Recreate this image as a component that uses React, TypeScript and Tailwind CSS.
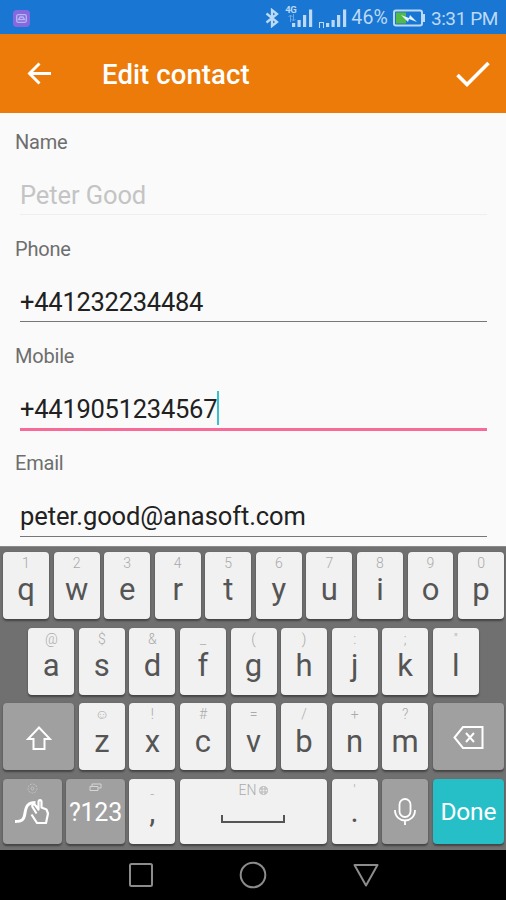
import type { ReactNode } from 'react';

interface FieldProps {
  label: string;
  value: string;
  state?: 'disabled' | 'focused';
  spacing?: string;
}

interface KeyProps {
  label?: string;
  hint?: ReactNode;
  className?: string;
  labelClass?: string;
  hintClass?: string;
  children?: ReactNode;
}

const TOP_ROW = ['q1', 'w2', 'e3', 'r4', 't5', 'y6', 'u7', 'i8', 'o9', 'p0'];
const HOME_ROW = ['a@', 's$', 'd&', 'f_', 'g(', 'h)', 'j:', 'k;', 'l"'];
const BOTTOM_ROW = ['z☺', 'x!', 'c#', 'v=', 'b/', 'n+', 'm?'];

function Signal() {
  return (
    <svg className="h-[20px] w-[22px]" viewBox="0 0 22 20" fill="currentColor">
      <rect x="0" y="15" width="3.200" height="4" />
      <rect x="5.500" y="12" width="3.200" height="7" />
      <rect x="11" y="7" width="3.200" height="12" />
      <rect x="17" y="1.500" width="3.200" height="17.500" />
    </svg>
  );
}

function StatusBar() {
  return (
    <div className="flex h-[34px] shrink-0 items-center bg-[#1976d2] pt-[2px] pr-[8px] pl-[13px] text-[#bcd9f6]">
      <span className="flex h-[17px] w-[17px] items-center justify-center rounded-[4px] bg-[#8669de]">
        <svg className="h-[9px] w-[11px]" viewBox="0 0 11 9" fill="none" stroke="#b6b6f4" strokeWidth="1.3">
          <rect x="0.700" y="0.700" width="9.600" height="7.600" rx="1.500" />
          <path d="M2.500 5.500 4 3h3l1.500 2.500z" />
        </svg>
      </span>
      <div className="flex-1" />
      <svg className="h-[20px] w-[14px]" viewBox="0 0 14 20" fill="none" stroke="currentColor" strokeWidth="2.3">
        <path d="M1.500 5.500 12 14l-5 4V2l5 4L1.500 14.500" />
      </svg>
      <div className="relative ml-[13px] h-[20px] w-[21px]">
        <Signal />
        <span className="absolute -top-[2px] -left-[7px] text-[9.500px] leading-[8px] font-bold tracking-[-0.6px]">4G</span>
        <svg className="absolute top-[6px] -left-[4px] h-[8px] w-[8px] opacity-50" viewBox="0 0 8 8" fill="none" stroke="currentColor">
          <path d="M2.500 8V1M.5 3l2-2 2 2M5.500 0v7M3.500 5l2 2 2-2" />
        </svg>
      </div>
      <div className="relative ml-[13px] h-[20px] w-[21px]">
        <Signal />
        <span className="absolute bottom-[0px] -left-[7px] h-[6px] w-[5px] border-[1.500px] border-b-0 border-[#bcd9f6]" />
      </div>
      <span className="ml-[4px] text-[19.500px] leading-none tracking-[0.1px]">46%</span>
      <svg className="ml-[5px] h-[18px] w-[32px]" viewBox="0 0 32 18" fill="none">
        <rect x="1" y="1.500" width="28" height="15" rx="2" stroke="currentColor" strokeWidth="2" />
        <rect x="3" y="3.500" width="10" height="11" fill="#53b948" />
        <path d="M31 5v8" stroke="currentColor" strokeWidth="2" />
        <path d="m8 6 8 3 1-3 7 7-8-3-1 3z" fill="#e3f2fd" />
      </svg>
      <span className="ml-[6px] text-[19px] leading-none tracking-[-0.400px]">3:31 PM</span>
    </div>
  );
}

function Header() {
  return (
    <header className="flex h-[79px] shrink-0 items-center bg-[#ec7b09] pr-[16px] pl-[27px] text-white">
      <svg className="-mt-[1px] h-[23px] w-[25px]" viewBox="0 0 25 23" fill="none" stroke="currentColor" strokeWidth="2.9">
        <path d="M24 11.500H3M12.500 1.500 2.500 11.500l10 10" />
      </svg>
      <h1 className="ml-[50px] flex-1 pt-[3px] text-[27.500px] leading-none font-medium tracking-[0.1px]">Edit contact</h1>
      <svg className="h-[26px] w-[34px]" viewBox="0 0 34 26" fill="none" stroke="currentColor" strokeWidth="3.600">
        <path d="m1.500 14 9.500 9.500L32.500 2" />
      </svg>
    </header>
  );
}

function Field({ label, value, state, spacing = 'tracking-[-0.1px]' }: FieldProps) {
  const underline =
    state === 'disabled'
      ? 'border-b border-[#efefef]'
      : state === 'focused'
        ? 'border-b-[3px] border-[#f86a98]'
        : 'border-b border-[#777777]';

  return (
    <div className="h-[107.300px] shrink-0 pr-[19px] pl-[15px]">
      <div className="pt-[17.500px] text-[20px] leading-[22px] tracking-[-0.2px] text-[#6e6e6e]">{label}</div>
      <div className={`mt-[24px] ml-[5px] flex items-start ${state === 'focused' ? 'h-[39.500px]' : 'h-[38.500px]'} ${underline}`}>
        <span className={`pt-[3px] text-[25.500px] leading-[30px] ${spacing} ${state === 'disabled' ? 'text-[#c4c4c4]' : 'text-[#212121]'}`}>
          {value}
        </span>
        {state === 'focused' && <span className="-mt-[0.500px] h-[34px] w-[1.500px] bg-[#38c1cf]" />}
      </div>
    </div>
  );
}

function Key({
  label,
  hint,
  className = 'flex-1 bg-[#f1f1f1] text-[#555555]',
  labelClass = 'pt-[9.500px] leading-[36px]',
  hintClass = 'top-[3px] leading-[16px]',
  children,
}: KeyProps) {
  return (
    <div className={`relative flex h-full items-center justify-center rounded-[4px] shadow-[0_1.500px_2px_#444444] ${className}`}>
      {hint && (
        <span className={`absolute inset-x-0 flex justify-center text-[14px] font-light text-[#aaaaaa] ${hintClass}`}>{hint}</span>
      )}
      {label && <span className={`text-[31px] ${labelClass}`}>{label}</span>}
      {children}
    </div>
  );
}

function Keyboard() {
  const letters = (row: string[]) => row.map(k => <Key key={k} label={k[0]} hint={k[1]} />);

  return (
    <div className="flex h-[304px] shrink-0 flex-col gap-[8.700px] border-t border-[#8a8a8a] bg-[#707070] pt-[5px] pr-[2px] pl-[3px]">
      <div className="flex h-[67px] gap-[4.600px]">{letters(TOP_ROW)}</div>
      <div className="flex h-[67px] gap-[4.600px] px-[25.300px]">{letters(HOME_ROW)}</div>
      <div className="flex h-[67px] gap-[4.600px]">
        <Key className="w-[71.300px] bg-[#a0a0a0] text-white">
          <svg className="mt-[2px] h-[24px] w-[26px]" viewBox="0 0 26 24" fill="none" stroke="currentColor" strokeWidth="2">
            <path d="M13 1.500 24 13h-5.500v10h-11V13H2z" />
          </svg>
        </Key>
        {letters(BOTTOM_ROW)}
        <Key className="w-[71.300px] bg-[#a0a0a0] text-white">
          <svg className="mt-[2px] h-[23px] w-[31px]" viewBox="0 0 31 23" fill="none" stroke="currentColor" strokeWidth="2">
            <path d="M10 1h19.500v21H10L1.500 11.500z" />
            <path d="m13 7 8 9M21 7l-8 9" />
          </svg>
        </Key>
      </div>
      <div className="flex h-[65px] gap-[4.600px]">
        <Key
          className="w-[58.600px] bg-[#a0a0a0] text-white"
          hint={
            <svg className="mt-[1px] h-[11px] w-[11px]" viewBox="0 0 11 11" fill="none" stroke="#c2c2c2">
              <circle cx="5.500" cy="5.500" r="4.500" strokeDasharray="2 1" />
              <circle cx="5.500" cy="5.500" r="1.500" />
            </svg>
          }
        >
          <svg className="h-[26px] w-[36px]" viewBox="0 0 36 26" fill="none" stroke="currentColor" strokeWidth="2.200" strokeLinejoin="round">
            <path d="M1 22.500c7 0 9-1.500 10-8.500 1-7 3-10.500 10.500-10.500" strokeWidth="3" />
            <path d="M22.500 14.500 18.500 8c-1-2.500 1.500-3.500 3-1.500l3 4V3c0-2.500 3-2.500 3 0v5.500l5 2 1.500 4-2 9.500H23l-5.500-8.500" />
          </svg>
        </Key>
        <Key
          className="w-[58.600px] bg-[#a0a0a0] text-white"
          hint={
            <svg className="mt-[1px] h-[9px] w-[13px]" viewBox="0 0 13 9" fill="none" stroke="#d6d6d6">
              <path d="M1 3.500h8v4H1zM3 3V1h9v4H9.500" />
            </svg>
          }
        >
          <span className="pt-[2px] text-[25px] leading-none tracking-[-0.2px]">?123</span>
        </Key>
        <Key
          className="w-[46px] bg-[#f1f1f1] text-[#555555]"
          label=","
          hint="-"
          labelClass="leading-[16px]"
          hintClass="top-[9px] leading-[12px]"
        />
        <Key
          className="flex-1 bg-[#f1f1f1] text-[#555555]"
          hint={
            <span className="flex items-center gap-[3px]">
              EN
              <svg className="h-[9px] w-[9px]" viewBox="0 0 9 9" fill="none" stroke="#b9b9b9">
                <circle cx="4.500" cy="4.500" r="4" />
                <path d="M.5 3h8M.5 6h8M3 .5v8M6 .5v8" />
              </svg>
            </span>
          }
        >
          <svg className="mt-[15px] h-[8px] w-[64px]" viewBox="0 0 64 8" fill="none" stroke="currentColor" strokeWidth="2">
            <path d="M1 0v7h62V0" />
          </svg>
        </Key>
        <Key
          className="w-[46px] bg-[#f1f1f1] text-[#555555]"
          label="."
          hint="'"
          labelClass="leading-[16px]"
          hintClass="top-[5px] leading-[12px]"
        />
        <Key className="w-[46px] bg-[#a0a0a0] text-white">
          <svg className="h-[27px] w-[22px]" viewBox="0 0 22 27" fill="none" stroke="currentColor" strokeWidth="1.800">
            <rect x="5.500" y="1" width="11" height="18" rx="5.500" />
            <path d="M1 12c0 14 20 14 20 0M11 22.500V27" />
          </svg>
        </Key>
        <Key className="w-[71.300px] bg-[#27bfc7] text-white">
          <span className="pt-[1px] text-[24.500px] leading-none tracking-[-0.2px]">Done</span>
        </Key>
      </div>
    </div>
  );
}

function NavBar() {
  return (
    <nav className="flex h-[50px] shrink-0 items-center justify-center gap-[85.500px] bg-black text-[#8c8c8c]">
      <svg className="h-[26px] w-[26px]" viewBox="0 0 26 26" fill="none" stroke="currentColor" strokeWidth="2">
        <rect x="2" y="2" width="22" height="22" rx="1.500" />
      </svg>
      <svg className="h-[28px] w-[28px]" viewBox="0 0 28 28" fill="none" stroke="currentColor" strokeWidth="2">
        <circle cx="14" cy="14" r="12.300" />
      </svg>
      <svg className="h-[26px] w-[26px]" viewBox="0 0 26 26" fill="none" stroke="currentColor" strokeWidth="2" strokeLinejoin="round">
        <path d="M1.500 3h23L13 23.500z" />
      </svg>
    </nav>
  );
}

export default function App() {
  return (
    <div className="flex h-[900px] w-[506px] flex-col overflow-hidden bg-[#fafafa] font-['Roboto',sans-serif]">
      <StatusBar />
      <Header />
      <main className="flex h-[433px] shrink-0 flex-col overflow-hidden">
        <Field label="Name" value="Peter Good" state="disabled" />
        <Field label="Phone" value="+441232234484" spacing="tracking-[-0.25px]" />
        <Field label="Mobile" value="+4419051234567" state="focused" spacing="tracking-[-0.25px]" />
        <Field label="Email" value="peter.good@anasoft.com" />
      </main>
      <Keyboard />
      <NavBar />
    </div>
  );
}
